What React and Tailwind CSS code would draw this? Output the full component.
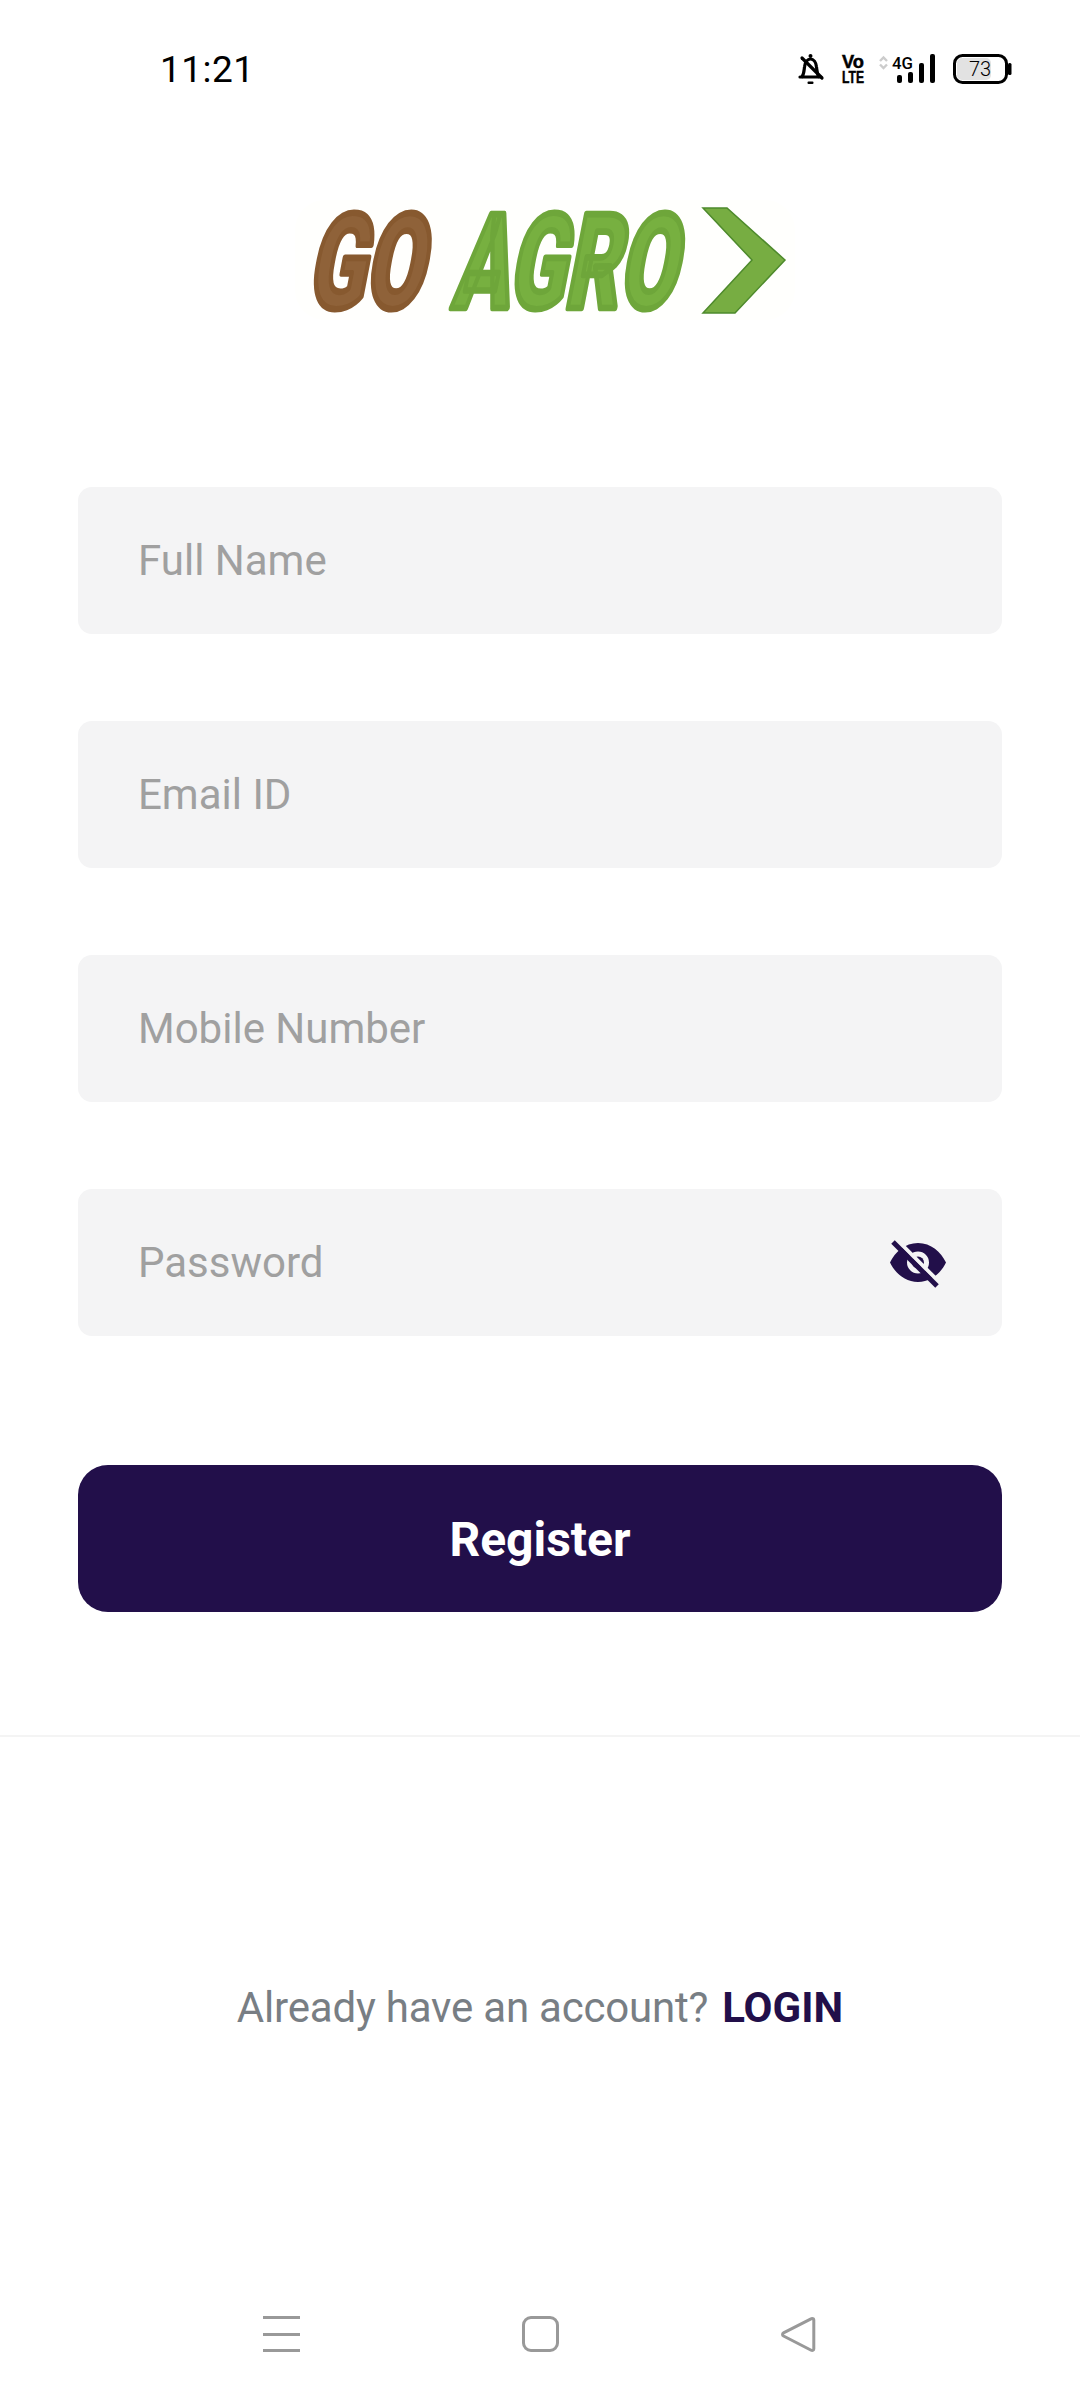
const FONT = "font-['Roboto',sans-serif]";

const FIELDS = ['Full Name', 'Email ID', 'Mobile Number'];

function StatusIcons() {
  return (
    <svg width="224" height="40" viewBox="0 0 224 40" className="block">
      {/* muted bell */}
      <g fill="none" stroke="#000" strokeWidth="3.2" strokeLinejoin="round" strokeLinecap="round">
        <path d="M6 27h21M8 27c2-3 2-6 2.500-10 .5-5 3-8 6-8s5.500 3 6 8c.5 4 .5 7 2.500 10" />
        <path d="M8 8l20 20" />
      </g>
      <circle cx="16.500" cy="6" r="2" fill="#000" />
      <rect x="13.500" y="31.500" width="6" height="2.500" rx="1" fill="#000" />
      {/* volte */}
      <text x="48" y="18" fontFamily="Liberation Sans" fontWeight="700" fontSize="19" stroke="#000" strokeWidth=".5" textLength="22" lengthAdjust="spacingAndGlyphs">Vo</text>
      <text x="48" y="33" fontFamily="Liberation Sans" fontWeight="700" fontSize="16.500" stroke="#000" strokeWidth=".5" textLength="22" lengthAdjust="spacingAndGlyphs">LTE</text>
      {/* data arrows */}
      <path d="M86 11l3.500-3.500 3.500 3.500M86 14.500l3.500 3.500 3.500-3.500" fill="none" stroke="#ccc" strokeWidth="2.400" />
      <text x="98" y="19" fontFamily="Roboto" fontWeight="500" fontSize="16" textLength="21" lengthAdjust="spacingAndGlyphs">4G</text>
      {/* signal */}
      <rect x="103" y="25" width="5" height="8" rx="2" fill="#000" />
      <rect x="114" y="22" width="5" height="11" rx="2" fill="#000" />
      <rect x="125" y="13" width="5" height="20" rx="2" fill="#000" />
      <rect x="136" y="4" width="5" height="29" rx="2" fill="#000" />
      {/* battery */}
      <rect x="160.500" y="5.500" width="52" height="27" rx="8" fill="#fff" stroke="#000" strokeWidth="3" />
      <rect x="163" y="8" width="34" height="22" rx="5" fill="#e2e2e2" />
      <rect x="214" y="13" width="3.500" height="12" rx="1.500" fill="#000" />
      <text x="186" y="26" textAnchor="middle" fontFamily="Roboto" fontWeight="300" fontSize="20">73</text>
    </svg>
  );
}

function Logo() {
  return (
    <svg width="500" height="160" viewBox="0 0 500 160" className="block">
      <rect x="0" y="16" width="500" height="120" rx="30" fill="#fffffd" />
      <g fontFamily="Roboto" fontWeight="900" fontSize="100" strokeLinejoin="round">
        <text transform="translate(11 124) skewX(-11) scale(.84 1.32)" fill="#8f6239" stroke="#87592f" strokeWidth="5">
          GO
        </text>
        <text transform="translate(156 124) skewX(-11) scale(.83 1.32)" fill="#77b040" stroke="#6ea63a" strokeWidth="5">
          AGRO
        </text>
      </g>
      <polygon points="408,24 432,24 490,76 440,129 408,129 457,76" fill="#77ad42" stroke="#4e8a2c" strokeWidth="1.500" />
    </svg>
  );
}

function EyeOff() {
  return (
    <svg width="60" height="50" viewBox="0 0 60 50" className="block">
      <path
        fillRule="evenodd"
        fill="#220f4a"
        d="M28 5c13 0 23 9 28 19.500C51 35 41 44 28 44S5 35 0 24.500C5 14 15 5 28 5zm0 8.500a11 11 0 100 22 11 11 0 000-22z"
      />
      <circle cx="28" cy="24.500" r="6" fill="#220f4a" />
      <path d="M6 1l45 45" stroke="#f4f4f5" strokeWidth="4" />
      <path d="M3 4l44 44" stroke="#220f4a" strokeWidth="5" />
    </svg>
  );
}

function Field({ label, children }) {
  return (
    <div className="flex h-[147px] items-center justify-between rounded-[14px] bg-[#f4f4f5] pl-[60px] pr-[52px]">
      <span className="text-[42px] leading-none text-[#a0a0a0]">{label}</span>
      {children}
    </div>
  );
}

export default function App() {
  return (
    <div className={`flex h-[2400px] w-[1080px] flex-col bg-white ${FONT}`}>
      <div className="flex h-[110px] shrink-0 items-center justify-between pt-[30px] pl-[160px] pr-[62px]">
        <span className="mb-[2px] text-[37px] leading-none tracking-[.5px] text-black">11:21</span>
        <StatusIcons />
      </div>

      <div className="mt-[74px] flex shrink-0 justify-center pl-[10px]">
        <Logo />
      </div>

      <div className="mt-[143px] flex flex-col gap-[87px] px-[78px]">
        {FIELDS.map((f) => (
          <Field key={f} label={f} />
        ))}
        <Field label="Password">
          <EyeOff />
        </Field>
      </div>

      <div className="mx-[78px] mt-[129px] flex h-[147px] shrink-0 items-center justify-center rounded-[30px] bg-[#220f4a]">
        <span className="pt-[3px] text-[48px] font-bold leading-none text-white">Register</span>
      </div>

      <div className="mt-[123px] h-[2px] shrink-0 bg-[#f4f4f4]" />

      <div className="mt-[250px] flex items-baseline justify-center gap-[14px] text-[42px] leading-none">
        <span className="tracking-[-0.2px] text-[#787e84]">Already have an account?</span>
        <span className="font-bold text-[#220f4a]">LOGIN</span>
      </div>

      <div className="mt-auto flex h-[84px] shrink-0 items-start justify-between pl-[263px] pr-[264px]">
        <div className="flex h-[36px] w-[37px] flex-col justify-between">
          <div className="h-[3px] bg-[#999]" />
          <div className="h-[3px] bg-[#999]" />
          <div className="h-[3px] bg-[#999]" />
        </div>
        <div className="h-[36px] w-[37px] rounded-[9px] border-[3px] border-[#999]" />
        <svg width="36" height="37" viewBox="0 0 36 37" className="block">
          <path d="M32 2.500c1 0 1.800.7 1.800 1.800v28.400c0 1.400-1.300 2.200-2.600 1.500L3.500 20c-1.300-.7-1.300-2.400 0-3.100L31 2.800c.4-.2.700-.3 1-.3z" fill="none" stroke="#999" strokeWidth="3" strokeLinejoin="round" />
        </svg>
      </div>
    </div>
  );
}
